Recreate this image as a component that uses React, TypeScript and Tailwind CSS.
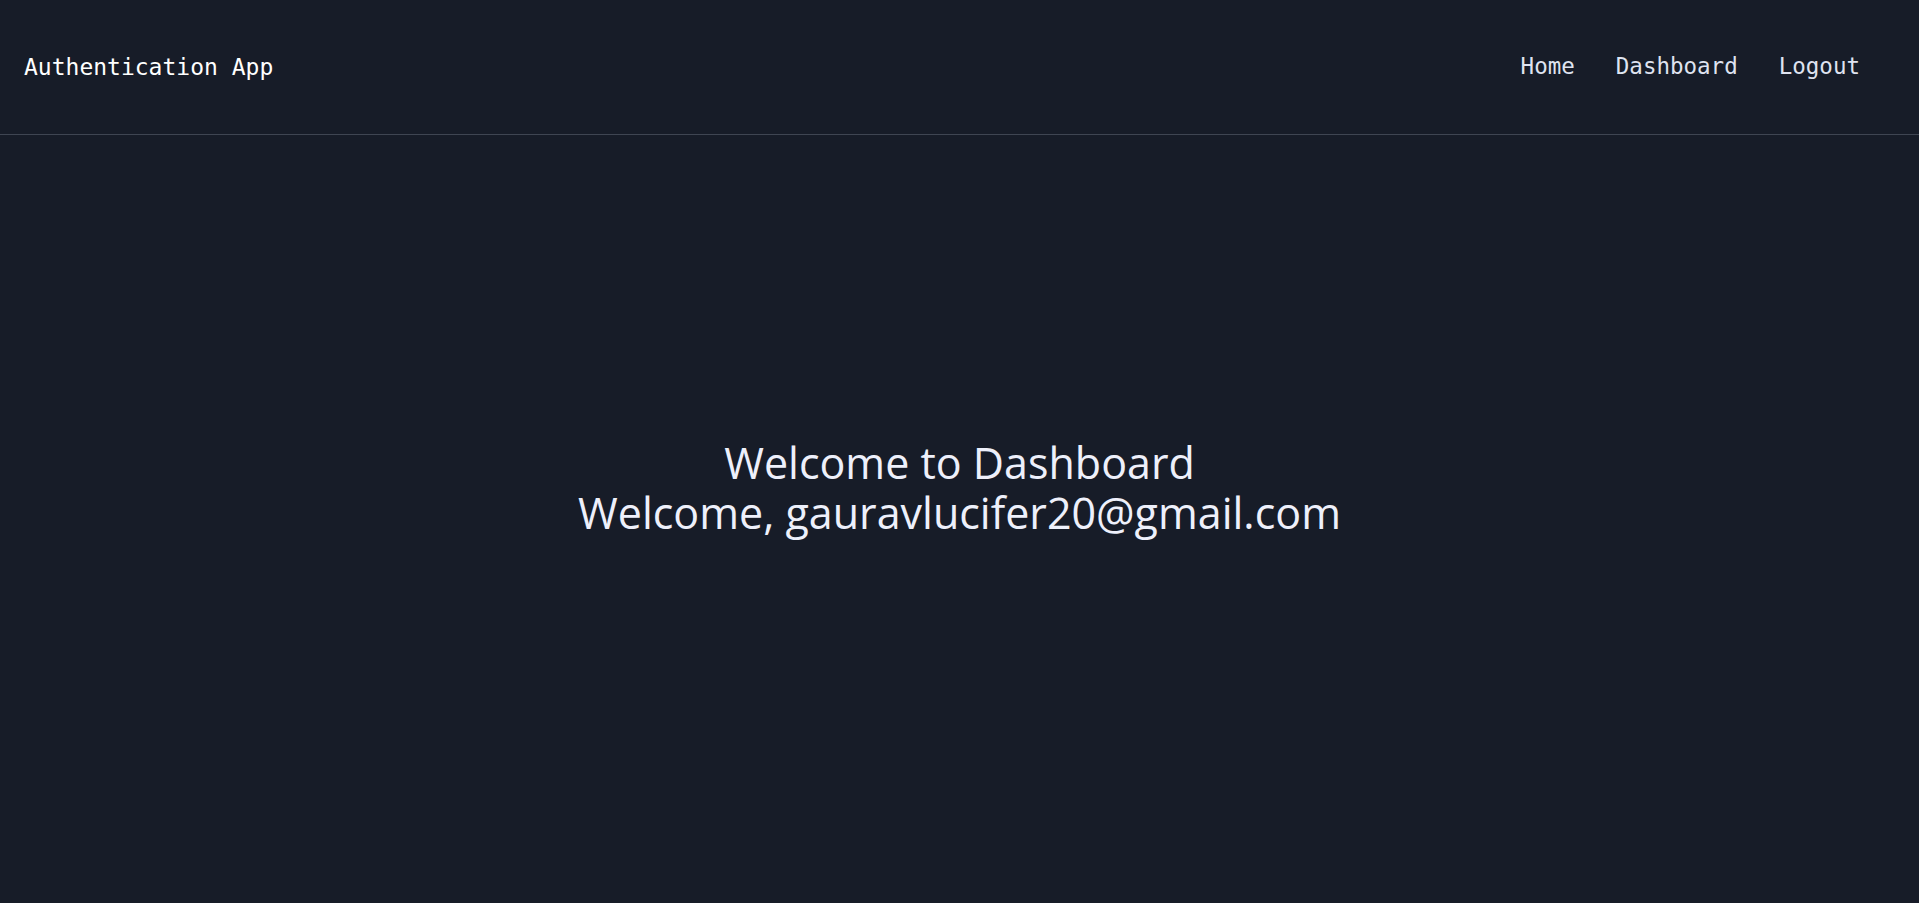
import React from 'react'

type NavLinkProps = {
    label: string
}

const NavLink = ({ label }: NavLinkProps) => {
    return (
        <a href="#" className="text-[#dfe3f0] hover:text-white">{label}</a>
    )
}

const Navbar = () => {
    return (
        <header className="h-[135px] shrink-0 flex flex-row items-center justify-between pl-6 pr-[59px] border-b border-[#3f4552] font-['DejaVu_Sans_Mono',monospace] text-[23px]">
            <span className="text-white">Authentication App</span>
            <nav className="flex flex-row items-center gap-[41px] text-[22.5px]">
                <NavLink label="Home" />
                <NavLink label="Dashboard" />
                <NavLink label="Logout" />
            </nav>
        </header>
    )
}

export default function App() {
    const email = "gauravlucifer20@gmail.com"

    return (
        <div className="min-h-screen h-[903px] flex flex-col bg-[#171c28] text-[#eef0fb]">
            <Navbar />
            <main className="flex-1 flex flex-col items-center justify-center pb-[62px]">
                <div className="text-center font-['Open_Sans',sans-serif] text-[43px] leading-[50px]">
                    <h1>Welcome to Dashboard</h1>
                    <p>Welcome, {email}</p>
                </div>
            </main>
        </div>
    )
}
